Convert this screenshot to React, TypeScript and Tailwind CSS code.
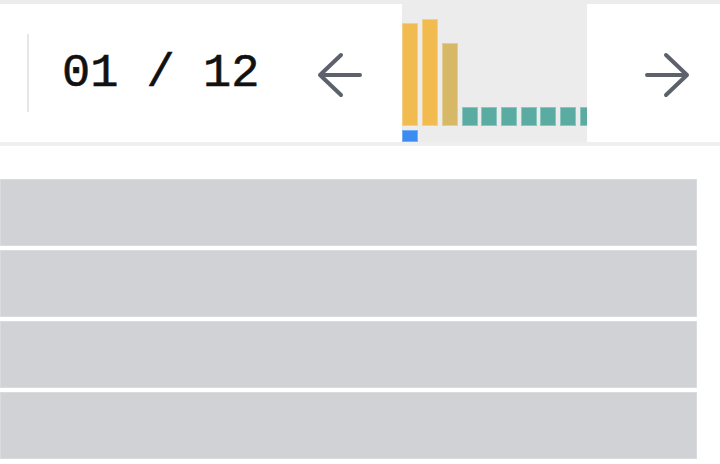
const bars = [
  { h: 103, color: 'bg-[#f2bb50]' },
  { h: 107, color: 'bg-[#f2bb50]' },
  { h: 83, color: 'bg-[#d7b866]' },
  { h: 19, color: 'bg-[#5aaca3]' },
  { h: 19, color: 'bg-[#5aaca3]' },
  { h: 19, color: 'bg-[#5aaca3]' },
  { h: 19, color: 'bg-[#5aaca3]' },
  { h: 19, color: 'bg-[#5aaca3]' },
  { h: 19, color: 'bg-[#5aaca3]' },
  { h: 19, color: 'bg-[#5aaca3]' },
];

function Arrow({ dir }: { dir: 'left' | 'right' }) {
  const d = dir === 'left' ? 'M24 3 3 23l21 20M3 23h40' : 'M22 3l21 20-21 20M43 23H3';
  return (
    <svg width="46" height="46" viewBox="0 0 46 46" fill="none" className="mt-[3px] shrink-0 text-[#5d616b]">
      <path d={d} stroke="currentColor" strokeWidth="4" strokeLinecap="round" strokeLinejoin="round" />
    </svg>
  );
}

export default function App() {
  return (
    <div className="w-[720px] h-[464px] overflow-hidden bg-white">
      <header className="flex h-[146px] items-center border-y-4 border-t-[#ececec] border-b-[#efefef] bg-white">
        <div className="ml-[27px] h-[78px] w-[2px] shrink-0 bg-[#e6e6e6]"></div>
        <span className="ml-[33px] shrink-0 font-['Liberation_Mono',monospace] text-[47px] leading-none text-[#111111] whitespace-pre [-webkit-text-stroke:0.6px_#111111]">
          01 / 12
        </span>
        <div className="ml-[58px]">
          <Arrow dir="left" />
        </div>
        <div className="ml-[39px] flex h-full w-[185px] shrink-0 flex-col overflow-hidden bg-[#ececec] pt-[15px]">
          <div className="flex flex-1 items-end gap-[3.7px]">
            {bars.map((b, i) => (
              <div
                key={i}
                className={`w-4 shrink-0 border border-white/30 ${b.color}`}
                style={{ height: b.h }}
              ></div>
            ))}
          </div>
          <div className="mt-[4px] h-[12px] w-4 border border-white/30 bg-[#3a8cf0]"></div>
        </div>
        <div className="ml-[57px]">
          <Arrow dir="right" />
        </div>
      </header>
      <div className="mt-[33px] flex w-[697px] flex-col gap-[4px]">
        {[0, 1, 2, 3].map((i) => (
          <div key={i} className="h-[67px] border border-[#dadbde] bg-[#d1d2d6]"></div>
        ))}
      </div>
    </div>
  );
}
